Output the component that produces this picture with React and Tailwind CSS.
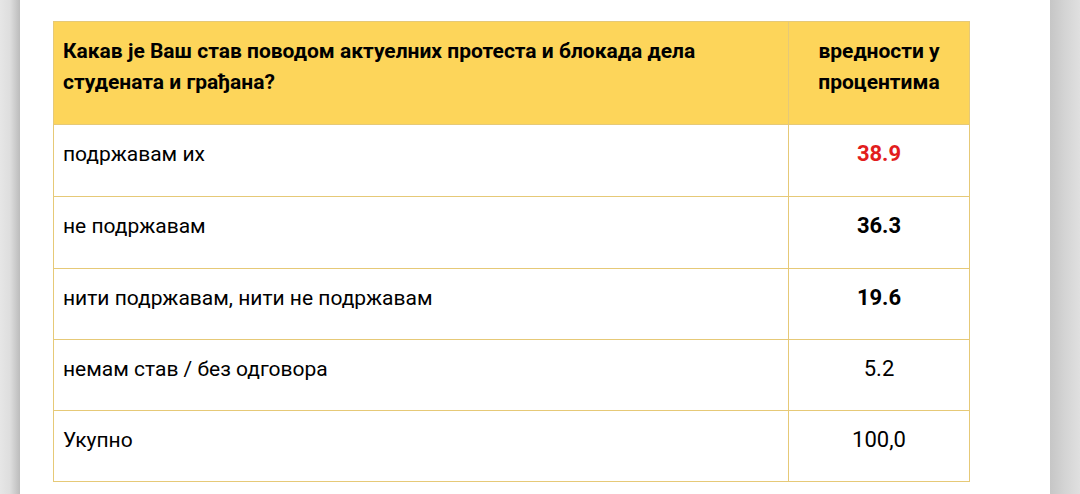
import React from 'react';

const rows = [
  { label: 'подржавам их', value: '38.9', cls: 'font-bold text-[#e21d1d]' },
  { label: 'не подржавам', value: '36.3', cls: 'font-bold text-black' },
  { label: 'нити подржавам, нити не подржавам', value: '19.6', cls: 'font-bold text-black' },
  { label: 'немам став / без одговора', value: '5.2', cls: 'text-black' },
  { label: 'Укупно', value: '100,0', cls: 'text-black' },
];

const App = () => {
  return (
    <div className="flex h-[494px] w-[1080px] overflow-hidden bg-white font-['Roboto',sans-serif]">
      {/* left edge */}
      <div className="w-[20px] bg-gradient-to-r from-[#e6e6e6] via-[#dedede] to-[#bcbcbc]" />

      {/* page */}
      <div className="flex-1 pl-[33px] pt-[21px]">
        <table className="w-[917px] border-collapse text-black">
          <thead>
            <tr className="h-[103px] bg-[#fdd55a]">
              <th className="w-[735px] border border-[#e6c977] px-[9px] pt-[14px] align-top text-left text-[21px] font-bold leading-[31px]">
                Какав је Ваш став поводом актуелних протеста и блокада дела
                <br />
                студената и грађана?
              </th>
              <th className="border border-[#e6c977] px-[9px] pt-[14px] align-top text-center text-[21px] font-bold leading-[31px]">
                вредности у
                <br />
                процентима
              </th>
            </tr>
          </thead>
          <tbody>
            {rows.map((r, i) => (
              <tr key={i} className={i < 2 ? 'h-[72px]' : 'h-[71px]'}>
                <td className="border border-[#e6c977] px-[9px] pt-[14px] align-top text-[21px] leading-[30px]">
                  {r.label}
                </td>
                <td className={'border border-[#e6c977] px-[9px] pt-[14px] align-top text-center text-[22px] leading-[30px] ' + r.cls}>
                  {r.value}
                </td>
              </tr>
            ))}
          </tbody>
        </table>
      </div>

      {/* right edge */}
      <div className="w-[30px] bg-gradient-to-r from-[#c6c6c6] via-[#d4d4d4] to-[#e0e0e0]" />
    </div>
  );
};

export default App;
